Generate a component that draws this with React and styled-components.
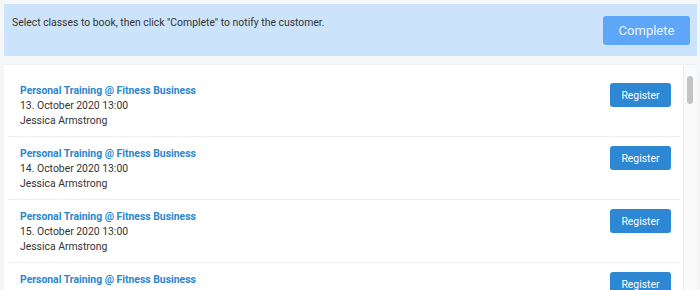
import React from "react";
import styled, { createGlobalStyle } from "styled-components";

const Global = createGlobalStyle`
  html, body { margin: 0; padding: 0; height: 290px; overflow: hidden; }
  body { background: #f4f6f8; font-family: Roboto, "Liberation Sans", Arial, sans-serif; }
`;

const Page = styled.div`
  padding: 4px 3px 0 4px;
  display: flex;
  flex-direction: column;
  gap: 8px;
`;

const Banner = styled.div`
  background: #cce4fb;
  height: 52px;
  box-sizing: border-box;
  padding: 0 7px 0 8px;
  display: flex;
  justify-content: space-between;
  align-items: center;
`;

const BannerText = styled.div`
  align-self: flex-start;
  margin-top: 12px;
  font-size: 10.4px;
  line-height: 13px;
  color: #333;
`;

const CompleteButton = styled.button`
  width: 87px;
  height: 29px;
  border: none;
  border-radius: 3px;
  background: #5ea6f7;
  color: #eaf3ff;
  font-family: Roboto, "Liberation Sans", Arial, sans-serif;
  font-size: 13px;
  padding: 0;
  cursor: pointer;
`;

const Panel = styled.div`
  background: #fff;
  border-top: 1px solid #eef0f2;
  height: 240px;
  box-sizing: border-box;
  display: flex;
`;

const List = styled.div`
  flex: 1;
  overflow: hidden;
  padding: 9px 3px 0 4px;
`;

const ScrollTrack = styled.div`
  width: 13px;
  flex: none;
  background: #fafafa;
  border-left: 1px solid #ececec;
  padding-top: 11px;
  box-sizing: content-box;
`;

const ScrollThumb = styled.div`
  width: 6px;
  height: 28px;
  margin-left: 3px;
  border-radius: 3px;
  background: #c3c3c3;
`;

const Row = styled.div`
  display: flex;
  justify-content: space-between;
  align-items: flex-start;
  padding: 9px 9px 8px 12px;
  border-bottom: 1px solid #eceff1;
`;

const Info = styled.div`
  display: flex;
  flex-direction: column;
  font-size: 10.4px;
  line-height: 15px;
  color: #333;
`;

const Title = styled.div`
  font-weight: 700;
  color: #2b86cd;
`;

const RegisterButton = styled.button`
  width: 61px;
  height: 24px;
  border: none;
  border-radius: 3px;
  background: #2d87d2;
  color: #fff;
  font-family: Roboto, "Liberation Sans", Arial, sans-serif;
  font-size: 10.4px;
  padding: 0;
  cursor: pointer;
`;

function formatDate(offset) {
  const d = new Date(2020, 9, 13 + offset, 13, 0);
  const months = ["January","February","March","April","May","June","July","August","September","October","November","December"];
  return `${d.getDate()}. ${months[d.getMonth()]} ${d.getFullYear()} 13:00`;
}

const rows = Array.from({ length: 4 }, (_, i) => ({
  id: i,
  title: "Personal Training @ Fitness Business",
  date: formatDate(i),
  trainer: "Jessica Armstrong",
}));

export default function App() {
  return (
    <>
      <Global />
      <Page>
        <Banner>
          <BannerText>Select classes to book, then click "Complete" to notify the customer.</BannerText>
          <CompleteButton>Complete</CompleteButton>
        </Banner>
        <Panel>
          <List>
            {rows.map((r) => (
              <Row key={r.id}>
                <Info>
                  <Title>{r.title}</Title>
                  <div>{r.date}</div>
                  <div>{r.trainer}</div>
                </Info>
                <RegisterButton>Register</RegisterButton>
              </Row>
            ))}
          </List>
          <ScrollTrack>
            <ScrollThumb />
          </ScrollTrack>
        </Panel>
      </Page>
    </>
  );
}
